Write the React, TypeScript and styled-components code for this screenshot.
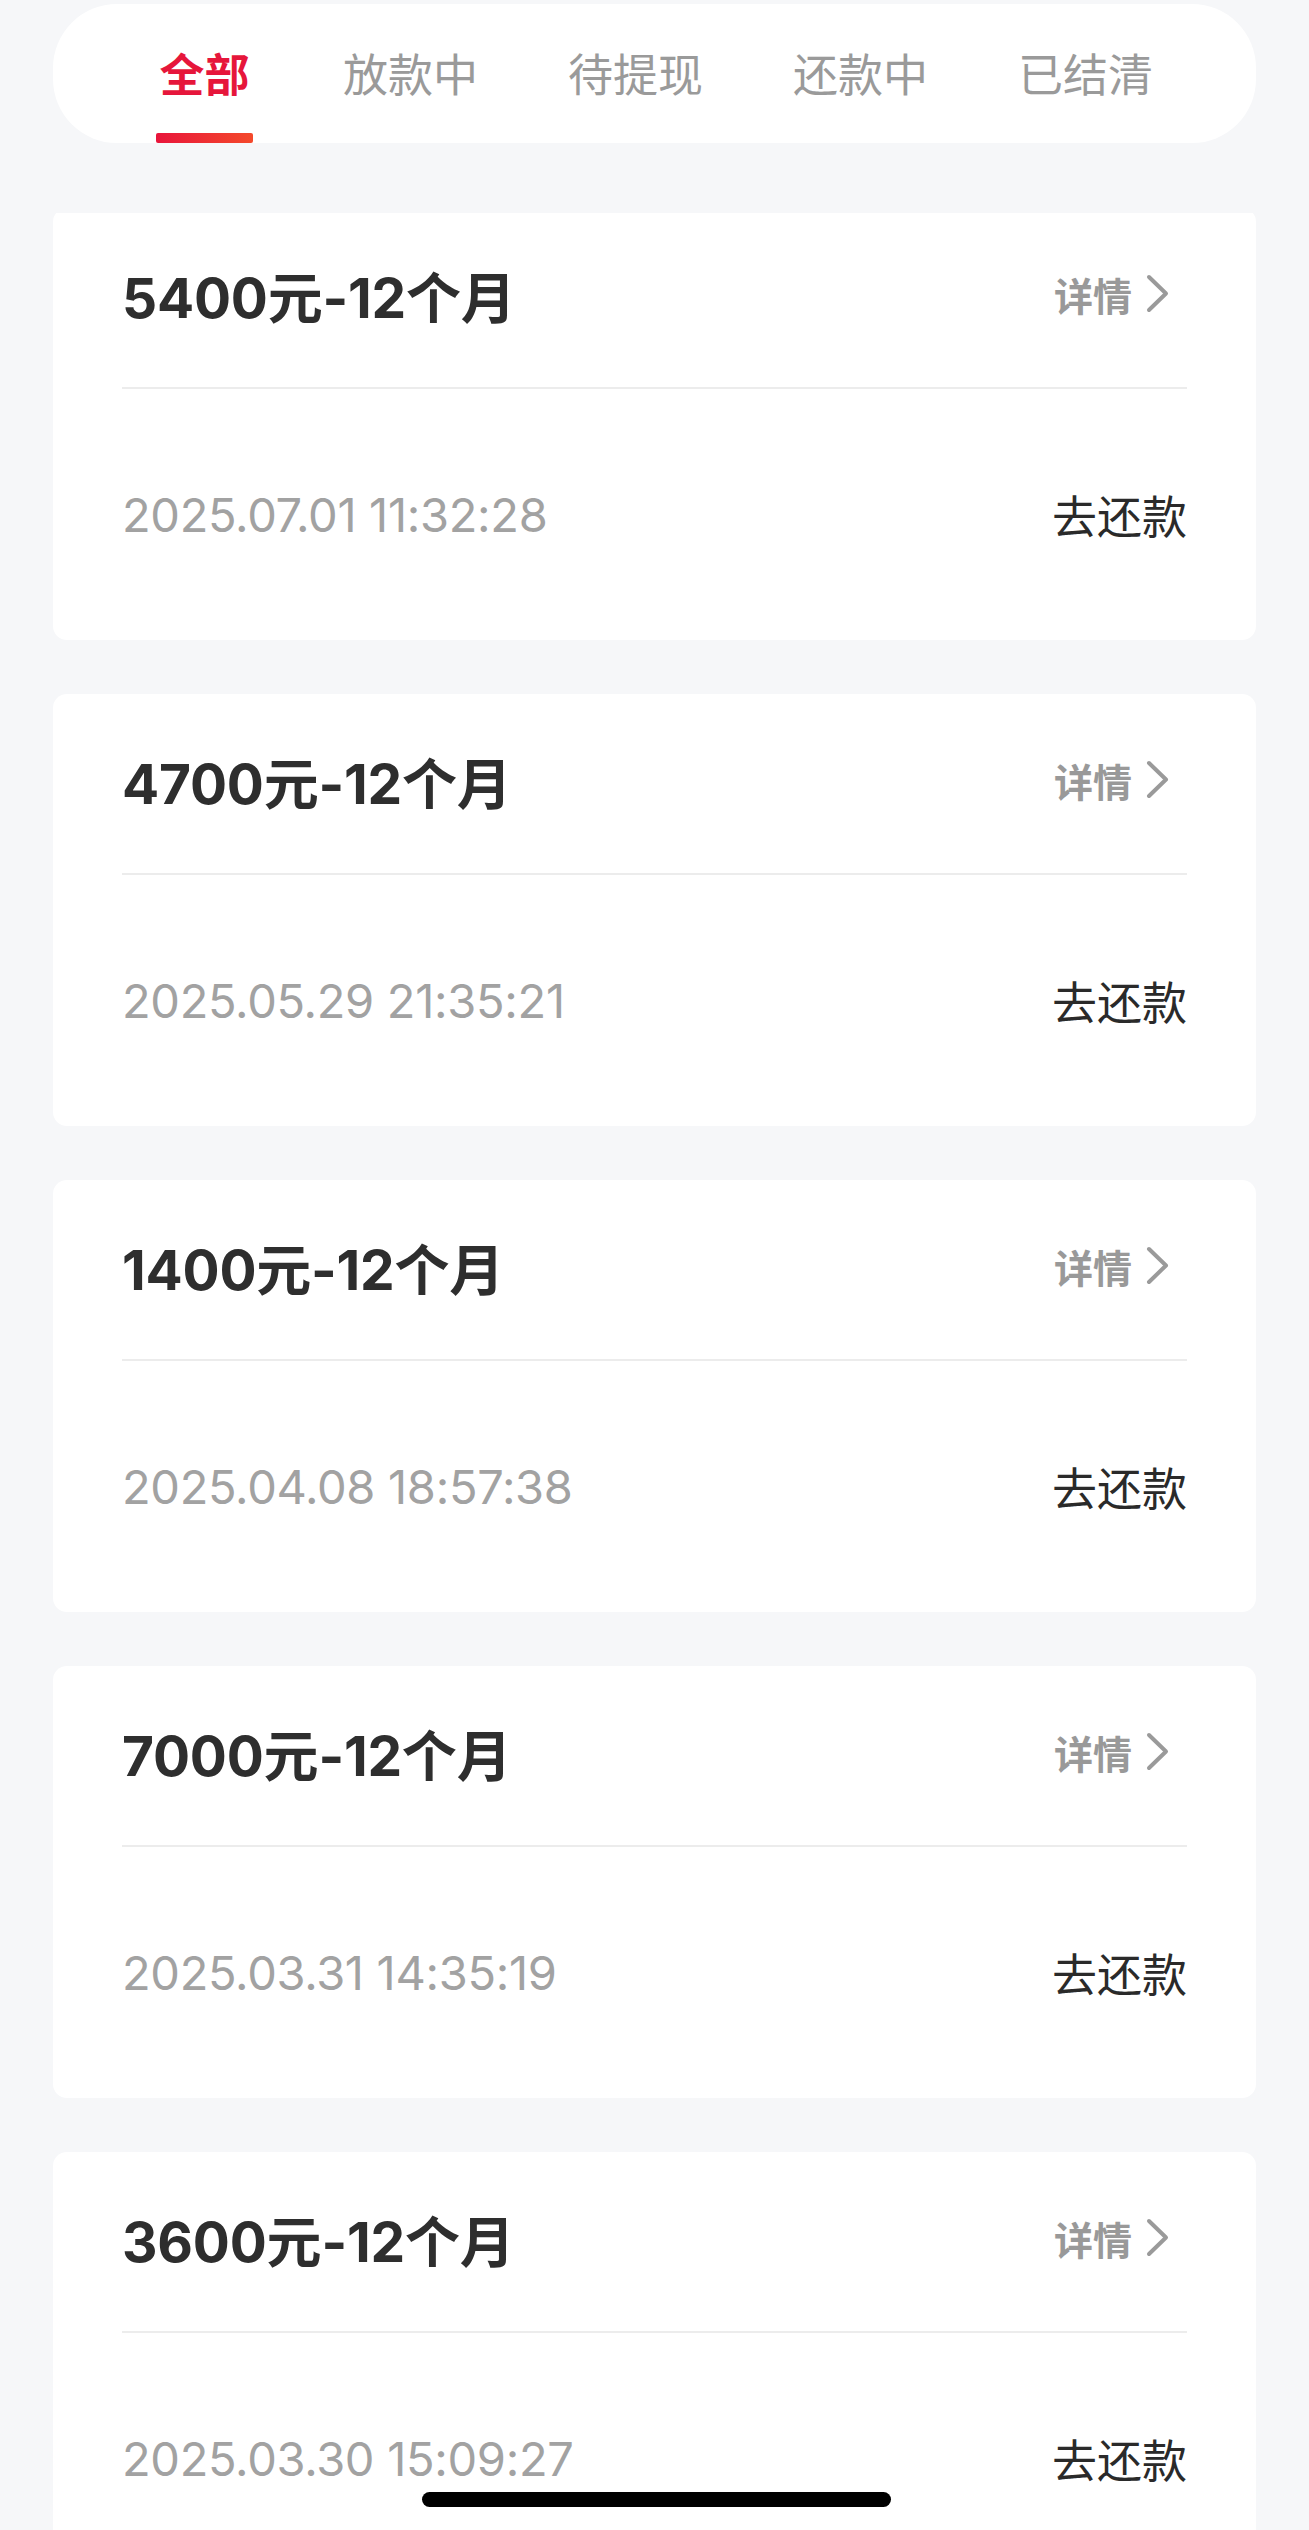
import styled, { createGlobalStyle } from 'styled-components';

const GlobalStyle = createGlobalStyle`
  body {
    margin: 0;
    background: #f6f7f9;
    font-family: Inter, "Noto Sans CJK SC", sans-serif;
  }
`;

const Screen = styled.div`
  position: relative;
  height: 2530px;
  overflow: hidden;
  background: #f6f7f9;
`;

const Header = styled.div`
  position: sticky;
  top: 0;
  z-index: 2;
  height: 213px;
  box-sizing: border-box;
  padding: 4px 53px 0;
  background: #f6f7f9;
`;

const TabBar = styled.div`
  height: 139px;
  display: flex;
  justify-content: center;
  gap: 90px;
  background: #fff;
  border-radius: 64px;
`;

const Tab = styled.div<{ $active?: boolean }>`
  display: flex;
  flex-direction: column;
  align-items: center;
  font-family: "Noto Sans CJK SC", sans-serif;
  font-size: 45px;
  line-height: 1;
  font-weight: ${(p) => (p.$active ? 700 : 400)};
  color: ${(p) => (p.$active ? '#e6163b' : '#9a9a9a')};
`;

const TabLabel = styled.span`
  margin-top: 46px;
`;

const Indicator = styled.div`
  margin-top: auto;
  width: 97px;
  height: 10px;
  border-radius: 2px;
  background: linear-gradient(90deg, #e8153b, #f4492b);
`;

const List = styled.div`
  margin-top: -5px;
  padding: 0 53px;
  display: flex;
  flex-direction: column;
  gap: 54px;
`;

const Card = styled.div`
  flex-shrink: 0;
  height: 432px;
  box-sizing: border-box;
  padding: 0 69px;
  background: #fff;
  border-radius: 14px;
`;

const Row = styled.div<{ $h: number; $lift?: number }>`
  height: ${(p) => p.$h}px;
  box-sizing: border-box;
  padding-bottom: ${(p) => p.$lift ?? 0}px;
  display: flex;
  align-items: center;
  justify-content: space-between;
`;

const Title = styled.div`
  font-size: 55px;
  font-weight: 700;
  color: #2e2e2e;
  letter-spacing: -0.2px;
`;

const Detail = styled.div`
  display: flex;
  align-items: center;
  gap: 14px;
  margin-right: 18px;
  font-family: "Noto Sans CJK SC", sans-serif;
  font-size: 39px;
  font-weight: 600;
  color: #999;
`;

const Divider = styled.div`
  height: 2px;
  background: #ececec;
`;

const DateText = styled.div`
  font-size: 47px;
  font-weight: 400;
  color: #a2a2a2;
  letter-spacing: -0.3px;
`;

const Repay = styled.div`
  font-family: "Noto Sans CJK SC", sans-serif;
  font-size: 45px;
  color: #2a2a2a;
`;

const HomeIndicator = styled.div`
  position: absolute;
  left: 422px;
  bottom: 23px;
  width: 469px;
  height: 15px;
  border-radius: 8px;
  background: #000;
`;

const tabs = ['全部', '放款中', '待提现', '还款中', '已结清'];

const loans = [
  { title: '5400元-12个月', date: '2025.07.01 11:32:28' },
  { title: '4700元-12个月', date: '2025.05.29 21:35:21' },
  { title: '1400元-12个月', date: '2025.04.08 18:57:38' },
  { title: '7000元-12个月', date: '2025.03.31 14:35:19' },
  { title: '3600元-12个月', date: '2025.03.30 15:09:27' },
];

function Chevron() {
  return (
    <svg width="23" height="39" viewBox="0 0 23 39">
      <path d="M3 3 L20 19.5 L3 36" fill="none" stroke="#9a9a9a" strokeWidth="4" strokeLinecap="round" strokeLinejoin="round" />
    </svg>
  );
}

function App() {
  return (
    <Screen>
      <GlobalStyle />
      <Header>
        <TabBar>
          {tabs.map((t, i) => (
            <Tab key={t} $active={i === 0}>
              <TabLabel>{t}</TabLabel>
              {i === 0 && <Indicator />}
            </Tab>
          ))}
        </TabBar>
      </Header>

      <List>
        {loans.map((l) => (
          <Card key={l.date}>
            <Row $h={179} $lift={8}>
              <Title>{l.title}</Title>
              <Detail>
                详情
                <Chevron />
              </Detail>
            </Row>
            <Divider />
            <Row $h={251}>
              <DateText>{l.date}</DateText>
              <Repay>去还款</Repay>
            </Row>
          </Card>
        ))}
      </List>

      <HomeIndicator />
    </Screen>
  );
}

export default App;
